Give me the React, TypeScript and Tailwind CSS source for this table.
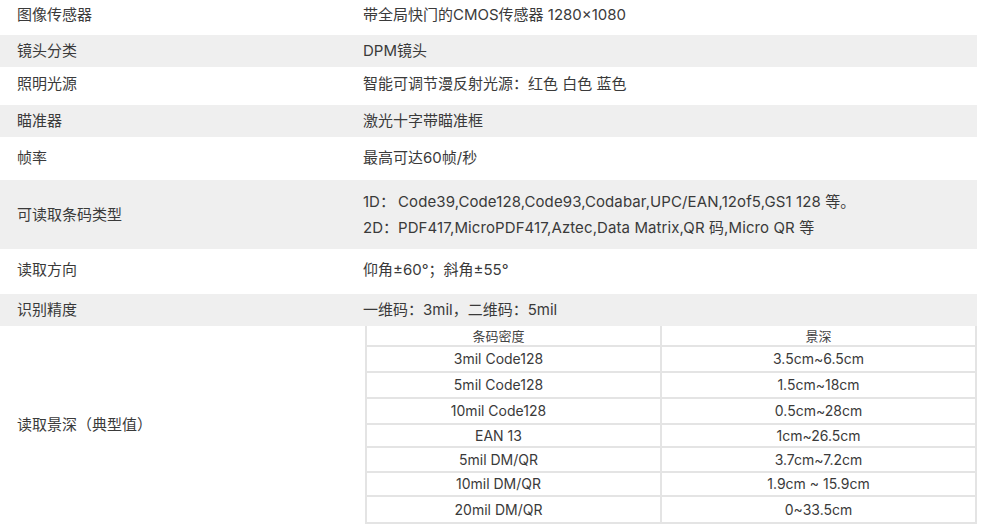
const specs = [
  { label: '图像传感器', value: '带全局快门的CMOS传感器 1280×1080', h: 'h-[35px] pb-[6px]', bg: 'bg-white' },
  { label: '镜头分类', value: 'DPM镜头', h: 'h-[32px]', bg: 'bg-[#efefef]' },
  { label: '照明光源', value: '智能可调节漫反射光源：红色 白色 蓝色', h: 'h-[38px] pb-[5px]', bg: 'bg-white' },
  { label: '瞄准器', value: '激光十字带瞄准框', h: 'h-[32px]', bg: 'bg-[#efefef]' },
  { label: '帧率', value: '最高可达60帧/秒', h: 'h-[43px] pb-[2px]', bg: 'bg-white' },
]

const depth = [
  ['3mil Code128', '3.5cm~6.5cm', 'h-[26px]'],
  ['5mil Code128', '1.5cm~18cm', 'h-[26px]'],
  ['10mil Code128', '0.5cm~28cm', 'h-[26px]'],
  ['EAN 13', '1cm~26.5cm', 'h-[23px]'],
  ['5mil DM/QR', '3.7cm~7.2cm', 'h-[25px]'],
  ['10mil DM/QR', '1.9cm ~ 15.9cm', 'h-[24px]'],
  ['20mil DM/QR', '0~33.5cm', 'h-[25px]'],
]

function Row({ label, children, className }: { label: string; children: React.ReactNode; className: string }) {
  return (
    <div className={`flex items-center ${className}`}>
      <div className="w-[363px] shrink-0 pl-[17px]">{label}</div>
      <div className="flex-1">{children}</div>
    </div>
  )
}

export default function App() {
  return (
    <div
      className="w-[977px] bg-white text-[15px] leading-[20px] text-[#3a3a3a]"
      style={{ fontFamily: 'Inter, "Noto Sans CJK SC", sans-serif' }}
    >
      {specs.map((s) => (
        <Row key={s.label} label={s.label} className={`${s.h} ${s.bg}`}>
          {s.value}
        </Row>
      ))}
      <Row label="可读取条码类型" className="h-[69px] bg-[#efefef]">
        <div className="flex flex-col gap-[6px]">
          <div className="flex">
            <span className="w-[35px] shrink-0">1D：</span>
            <span className="tracking-[0.1px]">Code39,Code128,Code93,Codabar,UPC/EAN,12of5,GS1 128 等。</span>
          </div>
          <div className="flex">
            <span className="w-[35px] shrink-0">2D：</span>
            <span className="tracking-[0.1px]">PDF417,MicroPDF417,Aztec,Data Matrix,QR 码,Micro QR 等</span>
          </div>
        </div>
      </Row>
      <Row label="读取方向" className="h-[45px] pb-[4px] bg-white">
        仰角±60°；斜角±55°
      </Row>
      <Row label="识别精度" className="h-[32px] bg-[#efefef]">
        一维码：3mil，二维码：5mil
      </Row>
      <div className="flex items-center bg-white">
        <div className="w-[363px] shrink-0 pl-[17px]">读取景深（典型值）</div>
        <div className="flex-1 pl-[2px]">
          <div className="border-l-2 border-b-2 border-r-2 border-[#e4e4e4] text-[14px]">
            <div className="flex h-[21px] items-center border-b-2 border-[#e4e4e4] text-[13px] text-[#444]">
              <div className="w-[295px] border-r-2 border-[#e4e4e4] pr-[30px] text-center">条码密度</div>
              <div className="flex-1 text-center">景深</div>
            </div>
            {depth.map(([a, b, h], i) => (
              <div
                key={a}
                className={`flex items-center ${h} ${i < depth.length - 1 ? 'border-b-2 border-[#e4e4e4]' : ''}`}
              >
                <div className="flex h-full w-[295px] items-center justify-center border-r-2 border-[#e4e4e4] pr-[30px]">
                  {a}
                </div>
                <div className="flex-1 text-center">{b}</div>
              </div>
            ))}
          </div>
        </div>
      </div>
    </div>
  )
}
